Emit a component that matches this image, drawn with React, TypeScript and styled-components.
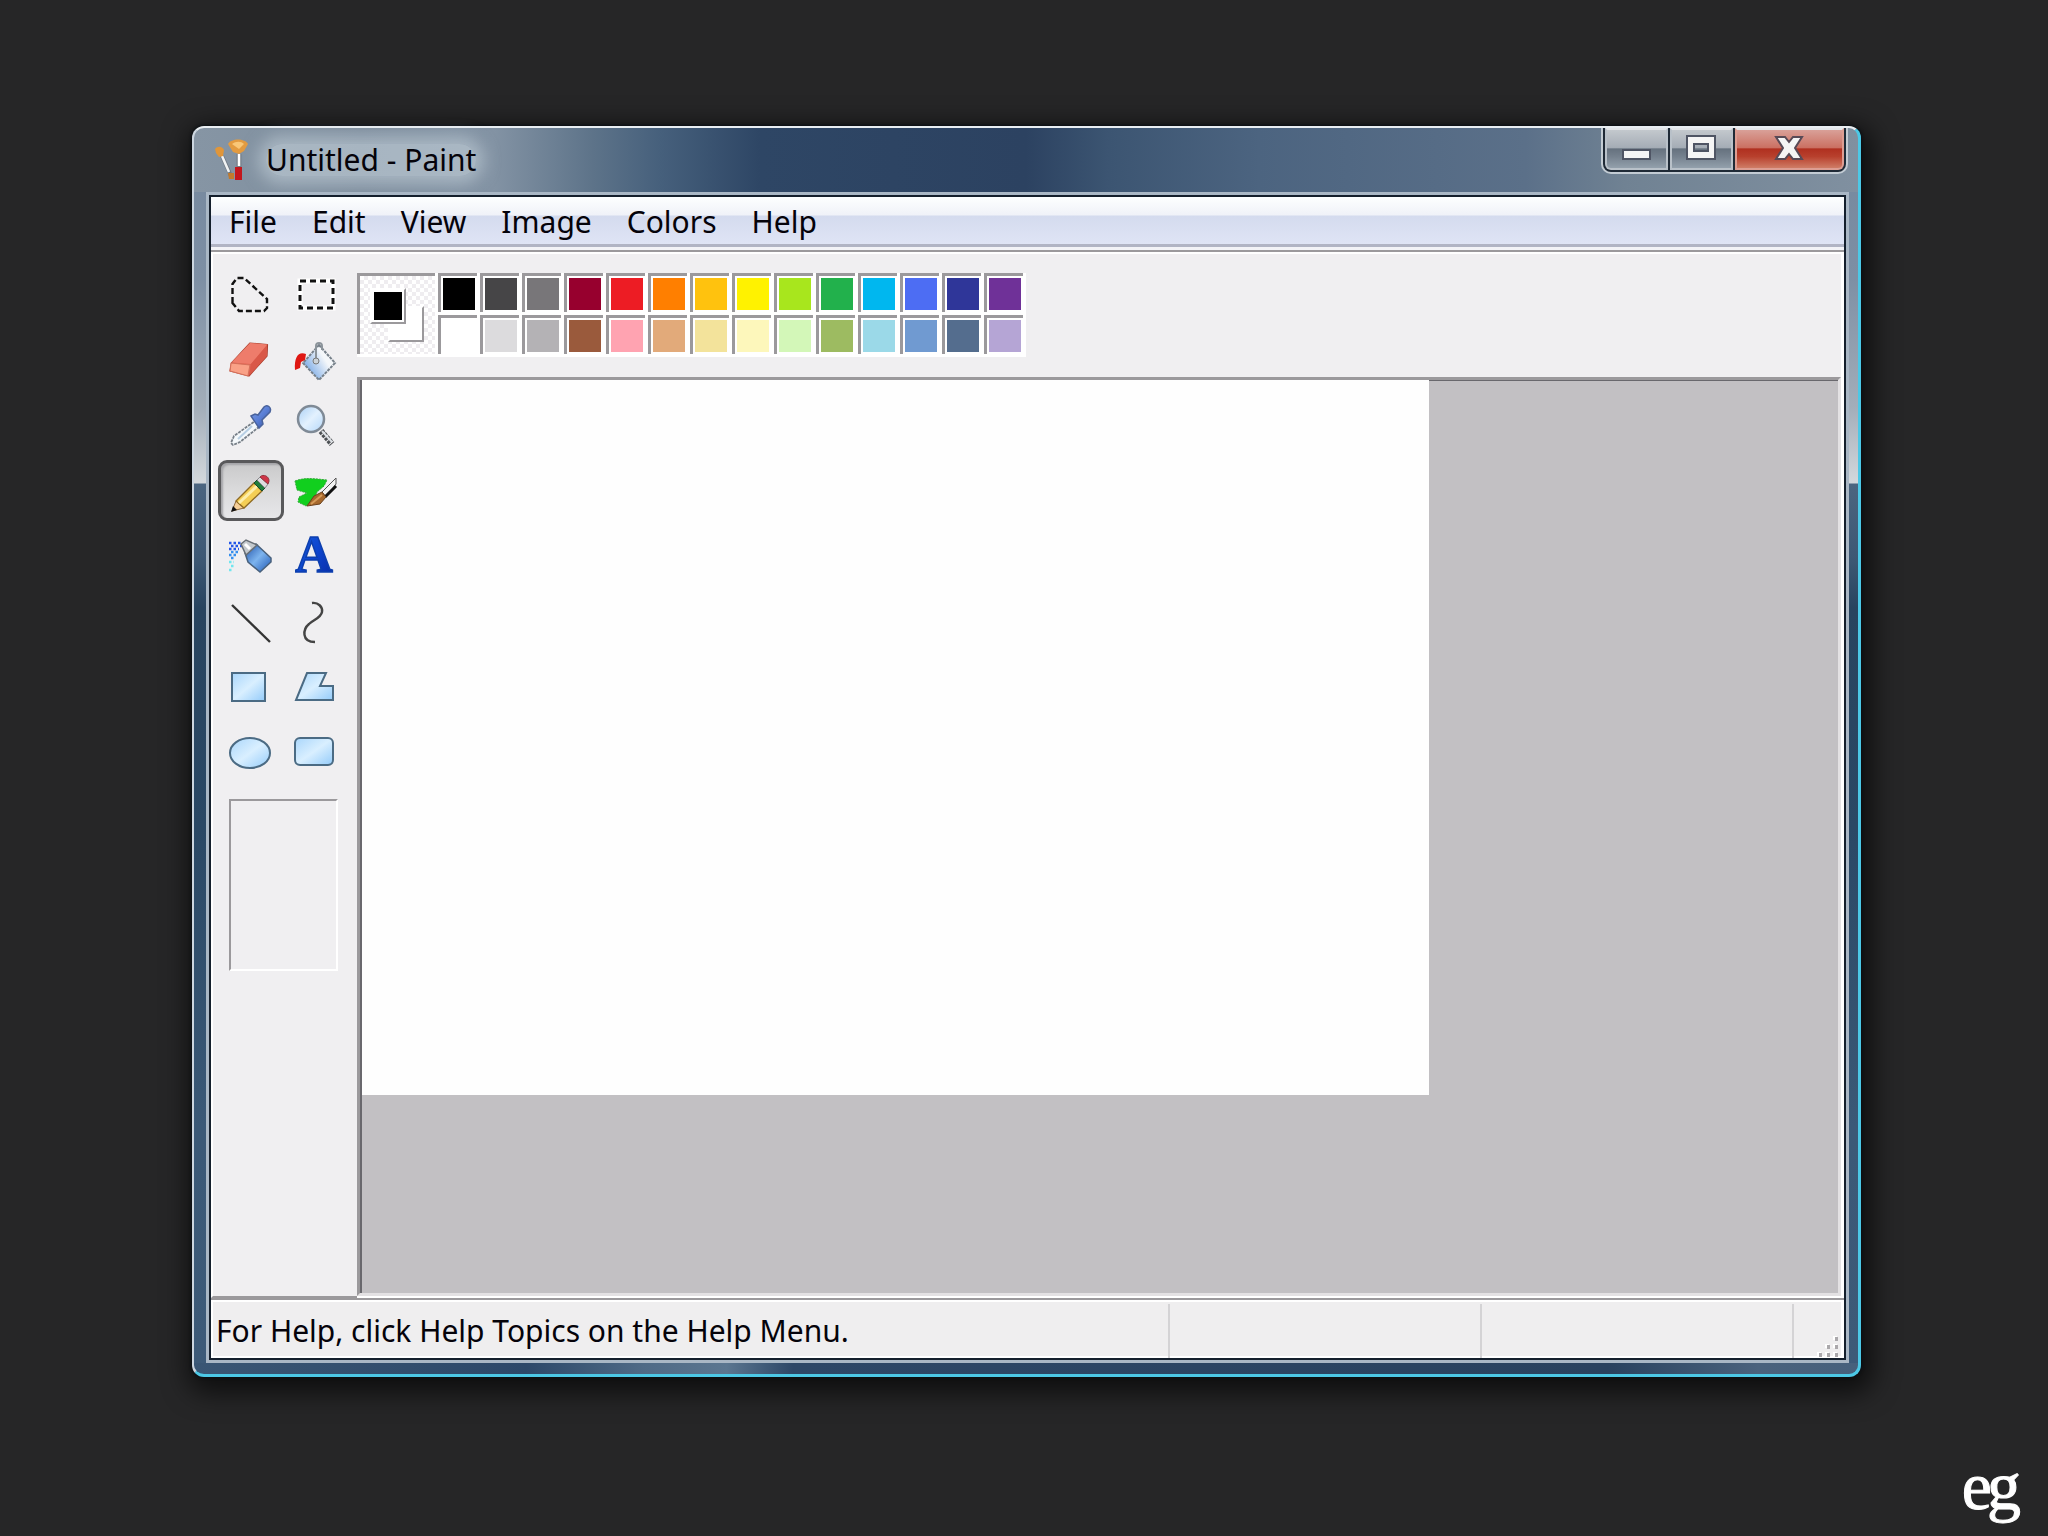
import React, { useState } from "react";
import styled, { createGlobalStyle, css } from "styled-components";

const uiFont = `"Noto Sans", "Open Sans", sans-serif`;
const face = "#f0eff1";
const shade = "#9b999c";

const GlobalStyle = createGlobalStyle`
  * { box-sizing: border-box; }
  body { margin: 0; background: #262627; font-family: ${uiFont}; color: #05030a; }
  button { font: inherit; color: inherit; }
`;

const Desktop = styled.div`
  position: relative;
  display: flex;
  min-height: 100vh;
  padding: 126px 187px 159px 192px;
`;

const Window = styled.section`
  flex: 1;
  min-width: 0;
  display: flex;
  flex-direction: column;
  padding: 0 9px 11px 12px;
  border: solid;
  border-width: 2px 3px 3px 2px;
  border-color: #e9eef2 #4cc8e6 #4cc8e6 #ccd6e0;
  border-radius: 12px;
  background:
    linear-gradient(90deg, #8695a4 0%, #7f8f9f 10%, #8393a4 18%, #5d7389 24%, #46607c 28%, #2e4665 34%, #2c4261 50%, #3c5572 55%, #4c6480 64%, #5b7089 80%, #708293 86%, #8090a0 100%) top / 100% 64px no-repeat,
    linear-gradient(90deg, #3a5674 0%, #2c4869 20%, #4f6a86 27%, #5b7690 32%, #2d4767 36%, #29425f 85%, #4a627d 94%, #46607c 100%) bottom / 100% 11px no-repeat,
    linear-gradient(180deg, #74879d 0, #7d8fa4 150px, #a3aeba 280px, #d3d8dc 355px, #4b6580 356px, #3d5874 430px, #28445f 480px, #2a4865 700px, #3b5977 1000px, #3d5a78 100%);
  box-shadow: 0 0 3px 1px #0a0f14, 4px 8px 26px 8px rgba(0, 0, 0, 0.62);
`;

const TitleBar = styled.header`
  display: flex;
  align-items: flex-start;
  height: 64px;
  padding-right: 1px;
`;

const Caption = styled.h1`
  display: flex;
  align-items: center;
  gap: 16px;
  flex: 1;
  height: 64px;
  margin: 0;
  padding-left: 8px;
  font-size: 30px;
  font-weight: 400;
  line-height: 32px;
`;

const CaptionText = styled.span`
  border-radius: 16px;
  background: rgba(208, 219, 228, 0.5);
  box-shadow: 0 0 16px 8px rgba(208, 219, 228, 0.5);
`;

const CaptionButtons = styled.div`
  display: flex;
  height: 46px;
  border: 2px solid #c3ccd4;
  border-top: 0;
  border-radius: 0 0 10px 10px;
  overflow: hidden;
  background: #1f2a36;
  gap: 2px;
  padding: 0 2px 2px;
`;

const CaptionButton = styled.button<{ $close?: boolean }>`
  display: grid;
  place-items: center;
  width: ${(p) => (p.$close ? 109 : 63)}px;
  padding: 0 2px 2px 0;
  border: 2px solid ${(p) => (p.$close ? "#dd9d92" : "#b9c1c9")};
  border-top-color: #e3e6e9;
  background: ${(p) =>
    p.$close
      ? "linear-gradient(#d9a098 0, #cb7163 46%, #b03020 50%, #b8402d 70%, #cf7c66 100%)"
      : "linear-gradient(#c3c8cd 0, #a5adb6 46%, #66727f 50%, #75818e 70%, #93a0ac 100%)"};
  &:first-child { border-bottom-left-radius: 6px; }
  &:last-child { border-bottom-right-radius: 6px; }
`;

const Client = styled.div`
  flex: 1;
  display: flex;
  flex-direction: column;
  border: 3px solid #a9b7c5;
  outline: 2px solid #141f2c;
  outline-offset: -5px;
  padding: 2px;
  background: ${face};
`;

const MenuBar = styled.nav`
  display: flex;
  gap: 35px;
  height: 50px;
  padding: 0 18px;
  border-bottom: 3px solid #b1b4c4;
  background: linear-gradient(#fdffff 0, #f0f2f8 18px, #d4dbee 19px, #dfe4f5 100%);
`;

const MenuItem = styled.button`
  padding: 0;
  border: 0;
  background: none;
  font-size: 30px;
  line-height: 50px;
`;

const Groove = styled.div`
  flex: none;
  height: 7px;
  border: solid;
  border-width: 3px 0 2px;
  border-color: #f3f3f7 transparent #fff;
  background: ${shade};
`;

const Body = styled.div`
  flex: 1;
  display: grid;
  grid-template-columns: 146px minmax(0, 1fr);
`;

const Toolbox = styled.aside`
  padding: 11px 7px;
  border-left: 2px solid #fff;
  border-bottom: 2px solid ${shade};
`;

const ToolGrid = styled.div`
  display: grid;
  grid-template-columns: 66px 66px;
  grid-auto-rows: 61px;
  row-gap: 4px;
  margin-left: -2px;
`;

const Tool = styled.button`
  display: grid;
  place-items: center;
  padding: 0;
  border: 3px solid transparent;
  border-radius: 9px;
  background: none;
  ${(p) =>
    p["aria-pressed"] &&
    css`
      border-color: #59595b;
      background: linear-gradient(#c9c9ca, #d9d9da 45%, #e7e7e9);
      box-shadow: inset 2px 2px 2px #a5a5a8;
    `}
  svg { overflow: visible; }
`;

const ToolOptions = styled.div`
  width: 109px;
  height: 172px;
  margin: 18px 0 0 9px;
  border: 2px solid;
  border-color: ${shade} #fff #fff ${shade};
`;

const Work = styled.div`
  display: flex;
  flex-direction: column;
  min-width: 0;
  border-right: 3px solid #fff;
  border-bottom: 2px solid #fff;
`;

const Palette = styled.div`
  display: flex;
  gap: 3px;
  width: max-content;
  margin: 19px 0 20px;
  padding: 0 3px 3px 0;
  background: #fff;
`;

const CurrentColors = styled.div`
  display: grid;
  width: 78px;
  padding: 12px 0 0 10px;
  border: solid ${shade};
  border-width: 3px 0 0 3px;
  background: repeating-conic-gradient(#efedf0 0 25%, #fff 0 50%) 0 0 / 8px 8px;
`;

const Chip = styled.span<{ $color: string; $back?: boolean }>`
  grid-area: 1 / 1;
  width: 36px;
  height: 36px;
  margin: ${(p) => (p.$back ? "18px 0 0 18px" : "0")};
  border: solid;
  border-width: 2px;
  border-color: #fff ${shade} ${shade} #fff;
  background: ${(p) => p.$color};
  background-clip: content-box;
  padding: 1px;
  box-shadow: inset 0 0 0 2px #fff;
`;

const Swatches = styled.div`
  display: grid;
  grid-template-columns: repeat(14, 39px);
  grid-auto-rows: 39px;
  gap: 3px;
`;

const Swatch = styled.button<{ $color: string }>`
  padding: 2px;
  border: solid ${shade};
  border-width: 3px 0 0 3px;
  background: ${(p) => p.$color} content-box;
`;

const Workspace = styled.main`
  flex: 1;
  border: solid;
  border-width: 3px;
  border-color: ${shade} #e3e1e3 #e3e1e3 ${shade};
  background: #c2c0c3;
  box-shadow: inset 2px 1px 0 #69686d;
  padding: 0 0 0 2px;
`;

const Sheet = styled.canvas`
  display: block;
  width: 1067px;
  height: 715px;
  max-width: 100%;
  background: #fefefe;
`;

const StatusBar = styled.footer`
  display: grid;
  grid-template-columns: minmax(0, 1fr) 312px 312px 52px;
  height: 60px;
  padding: 4px 0;
  border-top: 2px solid ${shade};
  box-shadow: inset 0 2px #fff, inset 0 -2px #fff, inset 2px 0 #fff, inset -3px 0 #fff;
  background: #efeeef;
`;

const StatusCell = styled.div`
  display: flex;
  justify-content: flex-end;
  align-items: flex-end;
  padding: 0 5px 0 0;
  border-left: 2px solid #d4d3d5;
`;

const StatusText = styled.div`
  padding-left: 5px;
  font-size: 30px;
  line-height: 54px;
  white-space: nowrap;
`;

const Logo = styled.div`
  position: absolute;
  right: 27px;
  bottom: 12px;
  display: flex;
  color: #fff;
  font: 68px/76px "Liberation Serif", serif;
  -webkit-text-stroke: 1px #fff;
`;

const LogoG = styled.span`
  margin-left: -5px;
`;

const outline = "#4b6b84";

const Icon = ({ children }: { children: React.ReactNode }) => (
  <svg width="44" height="44" viewBox="0 0 44 44" aria-hidden="true">
    {children}
  </svg>
);

const tools: { name: string; art: React.ReactNode }[] = [
  {
    name: "Free-Form Select",
    art: <path d="M3.5 29V10L8 4h7l23 21v9l-3 3H10z" fill="none" stroke="#111" strokeWidth="2.4" strokeDasharray="6 3" />,
  },
  {
    name: "Select",
    art: (
      <>
        <rect x="5" y="7" width="33" height="27" fill="none" stroke="#fff" strokeWidth="5" />
        <rect x="5" y="7" width="33" height="27" fill="none" stroke="#111" strokeWidth="3" strokeDasharray="6 4" />
      </>
    ),
  },
  {
    name: "Eraser",
    art: (
      <g stroke="#a8402f" strokeWidth="1.2" strokeLinejoin="round">
        <path d="M21 4l17.500 1.500L38 17 20 37 1 32l1.500-8z" fill="#e0604f" />
        <path d="M21 4l17.500 1.500L22 25 2.500 23.500z" fill="#ee7c6b" stroke="none" />
        <path d="M2 24l19 2-2 11L1 32z" fill="#f9a187" stroke="#d5715c" />
        <path d="M22 25L38 6v11L20 37z" fill="#d95848" stroke="none" />
      </g>
    ),
  },
  {
    name: "Fill With Color",
    art: (
      <>
        <path d="M24 6l16 18-16 17L8 24z" fill="url(#bucket)" stroke="#76808a" strokeWidth="2" strokeDasharray="3 1" />
        <path d="M11 15C4 12-1 17 0 31l5-2 1-6 4-2z" fill="#df1712" />
        <path d="M21 23V7a3 3 0 0 1 6 0v4" fill="none" stroke="#8c949b" strokeWidth="2" />
        <circle cx="21" cy="22" r="3" fill="#ccd3d8" stroke="#777" />
      </>
    ),
  },
  {
    name: "Pick Color",
    art: (
      <>
        <path d="M26 17l5 5L11 38l-7 3-2-2 3-7z" fill="#f4f8fb" stroke="#777f88" strokeWidth="1.800" strokeDasharray="3 1" />
        <path d="M9 35l14-13" stroke="#b8cfe4" strokeWidth="2" />
        <path d="M22 12l4-2 3 1 6-8c3-3 8 0 6 5l-8 8 1 4-4 4z" fill="url(#bulb)" stroke="#4a639c" strokeWidth="1.500" />
      </>
    ),
  },
  {
    name: "Magnifier",
    art: (
      <>
        <path d="M26 27l11 13" stroke="#4d5054" strokeWidth="6" strokeDasharray="3 1" />
        <path d="M27 27l10 11" stroke="#dde1e6" strokeWidth="2" />
        <circle cx="16" cy="15" r="13" fill="url(#lens)" stroke="#7f8a96" strokeWidth="2.500" />
      </>
    ),
  },
  {
    name: "Pencil",
    art: (
      <>
        <path d="M3 42l4-10 8 7z" fill="#f6cf98" stroke="#8e6a3c" />
        <path d="M7 32L25 14l8 8-18 17z" fill="#f4ce55" stroke="#8f6a22" strokeWidth="1.300" />
        <path d="M10 34l18-17" stroke="#fdeeaa" strokeWidth="3" />
        <path d="M25 14l3-3 8 8-3 3z" fill="#1f7c3b" stroke="#174c28" />
        <path d="M28 11l3-3 8 7-3 4z" fill="#dcdcde" stroke="#88888c" />
        <path d="M31 8c3-4 12 0 8 7z" fill="#cf3446" stroke="#96313c" />
        <path d="M2 43l2-6 4 4z" fill="#111" />
      </>
    ),
  },
  {
    name: "Brush",
    art: (
      <>
        <path d="M0 12c10-4 22-2 32-1l-3 6-7 6-4 10-7 4-8-4 1-5 8-4-10-3z" fill="#11cf1e" stroke="#35a83a" strokeDasharray="2 1" />
        <path d="M27 23L41 9v6L31 28z" fill="#f2f2f2" stroke="#555" />
        <path d="M30 28L41 17" stroke="#111" strokeWidth="3" />
        <path d="M12 37l7-10 8-4 4 5-6 7z" fill="#a7682d" stroke="#69401c" />
        <path d="M16 35l11-9" stroke="#d59a58" strokeWidth="2" />
      </>
    ),
  },
  {
    name: "Airbrush",
    art: (
      <>
        <path d="M0 9h12M2 12h12M0 15h10" stroke="#2457e8" strokeWidth="2.500" strokeDasharray="2.500 2" />
        <path d="M2 18h7M0 21h7M2 24h4" stroke="#358fee" strokeWidth="2.500" strokeDasharray="2.500 2" />
        <path d="M0 28h5M2 32h3M0 36h3" stroke="#70e6ef" strokeWidth="2.500" strokeDasharray="2.500 2" />
        <path d="M16 19l11-9 15 14v4L31 38 19 28z" fill="url(#can)" stroke="#49617c" strokeWidth="1.500" />
        <path d="M12 10l5-4 11 5-11 10z" fill="#c4c9cd" stroke="#666d74" strokeWidth="1.500" />
        <path d="M16 10l5 5" stroke="#fff" strokeWidth="3" />
      </>
    ),
  },
  {
    name: "Text",
    art: (
      <text x="19" y="38" textAnchor="middle" fontFamily="Liberation Serif, serif" fontWeight="700" fontSize="52" fill="url(#letter)" stroke="#0d3fae" strokeWidth="1.500">
        A
      </text>
    ),
  },
  { name: "Line", art: <path d="M3 6l38 37" stroke="#333" strokeWidth="2.400" /> },
  {
    name: "Curve",
    art: <path d="M17 4c6-1 11 4 10 9-1 6-9 8-13 12-6 5-8 18 6 18" fill="none" stroke="#444" strokeWidth="2.400" />,
  },
  { name: "Rectangle", art: <rect x="3" y="9" width="33" height="28" fill="url(#shape)" stroke={outline} strokeWidth="2" /> },
  {
    name: "Polygon",
    art: <path d="M12 9h19l-6 13h13v14H1z" fill="url(#shape)" stroke={outline} strokeWidth="2" />,
  },
  { name: "Ellipse", art: <ellipse cx="21" cy="24" rx="20" ry="15" fill="url(#shape)" stroke={outline} strokeWidth="2" /> },
  {
    name: "Rounded Rectangle",
    art: <rect x="0" y="9" width="38" height="27" rx="5" fill="url(#shape)" stroke={outline} strokeWidth="2" />,
  },
];

const colors = [
  "#000000", "#464547", "#787679", "#97002e", "#ed1c24", "#ff7f00", "#ffc20e", "#fff200", "#a8e61d", "#22b14c", "#00b7ef", "#4d6df3", "#2f3699", "#6f3198",
  "#ffffff", "#dcdbdd", "#b4b2b5", "#9a5a3c", "#ffa3b1", "#e2aa7a", "#f3e39b", "#fdf7bb", "#d3f7b8", "#9dbb61", "#9bd9e8", "#709ad1", "#546d8e", "#b5a5d5",
];

const stop = (id: string, a: string, b: string, c: string) => (
  <linearGradient id={id} x1="0" y1="0" x2="1" y2="1">
    <stop offset="0" stopColor={a} />
    <stop offset="0.5" stopColor={b} />
    <stop offset="1" stopColor={c} />
  </linearGradient>
);

const GradientDefs = styled.svg`
  position: absolute;
`;

const Gradients = () => (
  <GradientDefs width="0" height="0" aria-hidden="true">
    <defs>
      {stop("shape", "#a9d6fb", "#d9efff", "#93cbfa")}
      {stop("lens", "#a9cff5", "#e3f1fe", "#b3d7fa")}
      {stop("bulb", "#7f9fe6", "#5a7fd6", "#34509c")}
      {stop("can", "#1c4ea6", "#7db4ee", "#1d56b4")}
      {stop("letter", "#1a60dd", "#0d45cf", "#0728a0")}
      <linearGradient id="bucket" x1="1" y1="0" x2="0" y2="0.7">
        <stop offset="0.4" stopColor="#f4f7fa" />
        <stop offset="1" stopColor="#6fa3e4" />
      </linearGradient>
    </defs>
  </GradientDefs>
);

const BrushesIcon = () => (
  <svg width="36" height="42" viewBox="0 0 36 42" aria-hidden="true">
    <path d="M8 17l9 20" stroke="#6e7781" strokeWidth="4" />
    <path d="M8 17l7 16" stroke="#f1f3f4" strokeWidth="2.500" />
    <path d="M14 34h6v6h-5z" fill="#c27a2c" />
    <path d="M1 10c3-4 8-2 9 1l-1 6-4 1-3-4z" fill="#e0963a" />
    <path d="M25 15v14" stroke="#777f88" strokeWidth="5" />
    <path d="M25 15v12" stroke="#fff" strokeWidth="2.500" />
    <path d="M21 28h7v13h-7z" fill="#c3171d" />
    <path d="M14 5c3-6 17-6 20 0l-4 7-5 3-6-2z" fill="#e39b40" />
    <path d="M18 5c4-3 9-3 12 0l-5 5z" fill="#f9c777" />
  </svg>
);

const Grip = () => (
  <svg width="22" height="22" viewBox="0 0 22 22" aria-hidden="true">
    {[[16, 0], [8, 8], [16, 8], [0, 16], [8, 16], [16, 16]].map(([x, y]) => (
      <g key={`${x}-${y}`}>
        <rect x={x} y={y} width="4" height="4" fill="#fff" />
        <rect x={x + 2} y={y + 1} width="3" height="4" fill="#aaa8ab" />
      </g>
    ))}
  </svg>
);

export default function App() {
  const [tool, setTool] = useState("Pencil");
  const [color, setColor] = useState("#000000");
  return (
    <>
      <GlobalStyle />
      <Gradients />
      <Desktop>
        <Window aria-label="Paint">
          <TitleBar>
            <Caption>
              <BrushesIcon />
              <CaptionText>Untitled - Paint</CaptionText>
            </Caption>
            <CaptionButtons>
              <CaptionButton aria-label="Minimize">
                <svg width="30" height="36" viewBox="0 0 30 36">
                  <rect x="2" y="20" width="27" height="9" fill="#f5f5f5" stroke="#4f5564" strokeWidth="2" />
                </svg>
              </CaptionButton>
              <CaptionButton aria-label="Maximize">
                <svg width="30" height="36" viewBox="0 0 30 36">
                  <path d="M1 6h28v23H1zM8 14v7h14v-7z" fill="#f5f5f5" fillRule="evenodd" stroke="#4f5564" strokeWidth="2" />
                </svg>
              </CaptionButton>
              <CaptionButton $close aria-label="Close">
                <svg width="30" height="36" viewBox="0 0 30 36">
                  <path d="M2 7h9l4 5 4-5h9l-7 11 7 11h-9l-4-5-4 5H2l7-11z" fill="#f5f5f5" stroke="#584a56" strokeWidth="2" />
                </svg>
              </CaptionButton>
            </CaptionButtons>
          </TitleBar>
          <Client>
            <MenuBar>
              {["File", "Edit", "View", "Image", "Colors", "Help"].map((m) => (
                <MenuItem key={m}>{m}</MenuItem>
              ))}
            </MenuBar>
            <Groove />
            <Body>
              <Toolbox>
                <ToolGrid>
                  {tools.map((t) => (
                    <Tool key={t.name} aria-label={t.name} aria-pressed={tool === t.name} onClick={() => setTool(t.name)}>
                      <Icon>{t.art}</Icon>
                    </Tool>
                  ))}
                </ToolGrid>
                <ToolOptions />
              </Toolbox>
              <Work>
                <Palette>
                  <CurrentColors>
                    <Chip $color="#ffffff" $back />
                    <Chip $color={color} />
                  </CurrentColors>
                  <Swatches>
                    {colors.map((c) => (
                      <Swatch key={c} $color={c} aria-label={c} onClick={() => setColor(c)} />
                    ))}
                  </Swatches>
                </Palette>
                <Workspace>
                  <Sheet aria-label="Drawing" />
                </Workspace>
              </Work>
            </Body>
            <StatusBar>
              <StatusText>For Help, click Help Topics on the Help Menu.</StatusText>
              <StatusCell />
              <StatusCell />
              <StatusCell>
                <Grip />
              </StatusCell>
            </StatusBar>
          </Client>
        </Window>
        <Logo>
          e<LogoG>g</LogoG>
        </Logo>
      </Desktop>
    </>
  );
}
